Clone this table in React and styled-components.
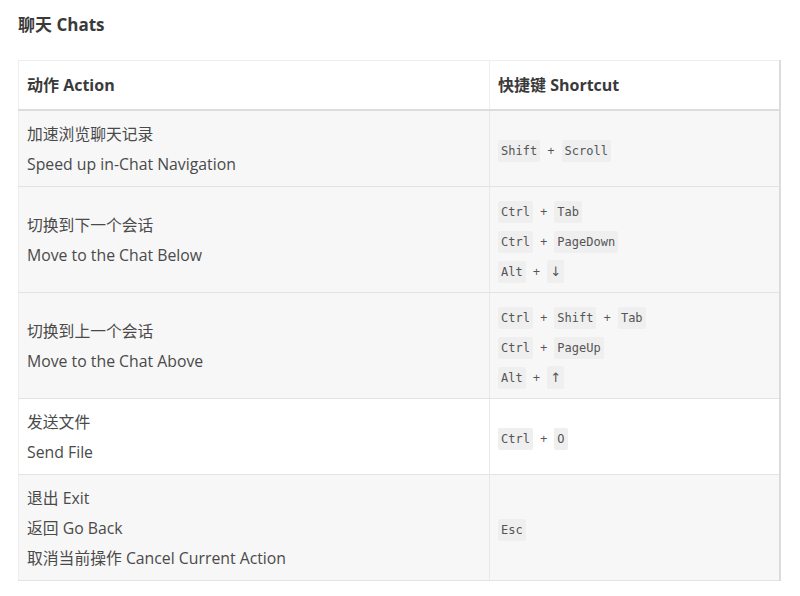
import React from 'react';
import styled, { createGlobalStyle } from 'styled-components';

const GlobalStyle = createGlobalStyle`
  body {
    margin: 0;
    background: #fff;
    font-family: "Open Sans", "Noto Sans CJK SC", sans-serif;
    color: #444;
  }
`;

const Page = styled.div`
  padding: 13px 18px 14px 18px;
`;

const Title = styled.h2`
  margin: 0 0 23px 0;
  font-size: 17px;
  line-height: 24px;
  font-weight: bold;
  color: #3a3a3a;
`;

const Table = styled.table`
  width: 763px;
  border-collapse: collapse;
  border-top: 1px solid #eee;
  border-left: 1px solid #eee;
  border-right: 2px solid #dcdcdc;
  font-size: 15.8px;
  line-height: 30px;
`;

const Th = styled.th`
  text-align: left;
  font-weight: bold;
  font-size: 16px;
  color: #3a3a3a;
  padding: 9px 9px 9px 8px;
  border-right: 1px solid #eee;
  border-bottom: 2px solid #dcdcdc;
  width: ${props => props.w};
`;

const Row = styled.tr`
  background: ${props => (props.plain ? '#fff' : '#f7f7f7')};
`;

const Td = styled.td`
  padding: 8px 9px 7px 8px;
  border-right: 1px solid #e8e8e8;
  border-bottom: 1px solid #e3e3e3;
  vertical-align: middle;
  color: #4a4a4a;
`;

const Line = styled.div`
  white-space: nowrap;
  height: 30px;
`;

const Key = styled.code`
  font-family: ${props =>
    props.arrow ? '"DejaVu Sans", sans-serif' : '"DejaVu Sans Mono", "Liberation Mono", monospace'};
  font-size: ${props => (props.arrow ? '13px' : '12px')};
  line-height: 16px;
  background: #efefef;
  color: #555;
  padding: 4px 3px;
  border-radius: 2px;
`;

const Plus = styled.span`
  font-size: 13px;
  line-height: 16px;
  color: #555;
  margin: 0 7px;
`;

const isArrow = k => k === '↓' || k === '↑';

const Combo = ({ keys }) => (
  <Line>
    {keys.map((k, i) => (
      <React.Fragment key={i}>
        {i > 0 && <Plus>+</Plus>}
        <Key arrow={isArrow(k) || undefined}>{k}</Key>
      </React.Fragment>
    ))}
  </Line>
);

const rows = [
  {
    action: ['加速浏览聊天记录', 'Speed up in-Chat Navigation'],
    keys: [['Shift', 'Scroll']]
  },
  {
    action: ['切换到下一个会话', 'Move to the Chat Below'],
    keys: [['Ctrl', 'Tab'], ['Ctrl', 'PageDown'], ['Alt', '↓']]
  },
  {
    action: ['切换到上一个会话', 'Move to the Chat Above'],
    keys: [['Ctrl', 'Shift', 'Tab'], ['Ctrl', 'PageUp'], ['Alt', '↑']]
  },
  {
    action: ['发送文件', 'Send File'],
    keys: [['Ctrl', 'O']],
    plain: true
  },
  {
    action: ['退出 Exit', '返回 Go Back', '取消当前操作 Cancel Current Action'],
    keys: [['Esc']]
  }
];

export default function App() {
  return (
    <Page>
      <GlobalStyle />
      <Title>聊天 Chats</Title>
      <Table>
        <thead>
          <tr>
            <Th w="453px">动作 Action</Th>
            <Th>快捷键 Shortcut</Th>
          </tr>
        </thead>
        <tbody>
          {rows.map((r, i) => (
            <Row key={i} plain={r.plain}>
              <Td>
                {r.action.map((a, j) => (
                  <Line key={j}>{a}</Line>
                ))}
              </Td>
              <Td>
                {r.keys.map((k, j) => (
                  <Combo key={j} keys={k} />
                ))}
              </Td>
            </Row>
          ))}
        </tbody>
      </Table>
    </Page>
  );
}
